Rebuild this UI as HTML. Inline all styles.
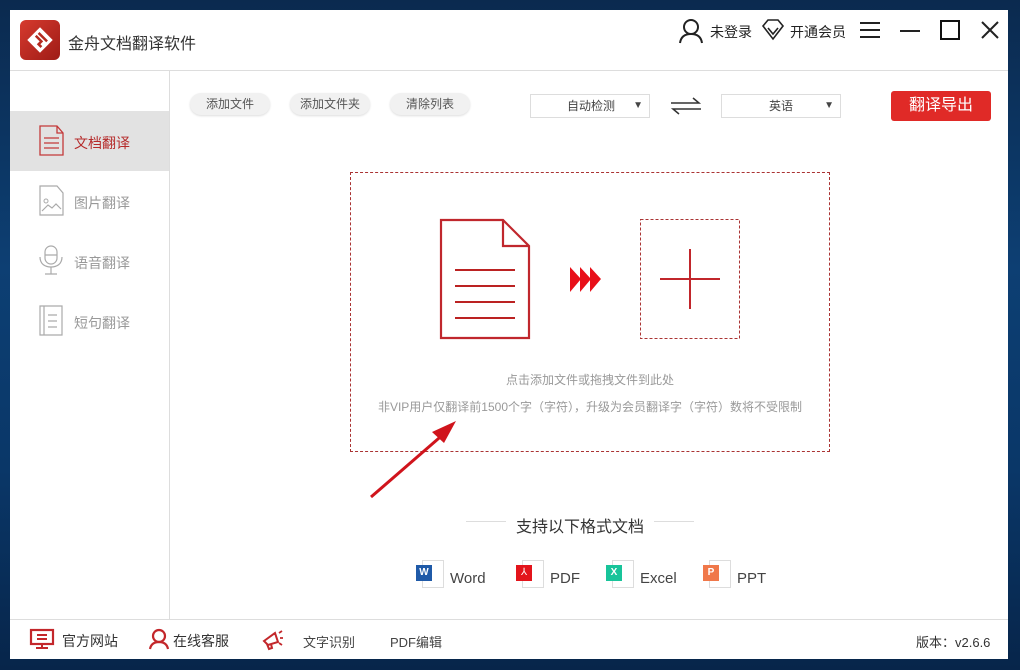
<!DOCTYPE html>
<html><head><meta charset="utf-8"><style>
*{margin:0;padding:0;box-sizing:border-box}
body{width:1020px;height:670px;overflow:hidden;background:linear-gradient(180deg,#0b2a4f 0%,#0d3f73 40%,#0a3768 70%,#07254a 100%);font-family:"Liberation Sans","Noto Sans CJK SC",sans-serif;position:relative}
.a{position:absolute}
.win{position:absolute;left:10px;top:10px;width:998px;height:649px;background:#fff}
.t{position:absolute;white-space:nowrap}
.btn{position:absolute;top:93px;height:22px;border-radius:11px;background:#f1f1f1;box-shadow:0 1px 2px #ddd;font-size:12px;color:#555;text-align:center;line-height:22px}
.sel{position:absolute;top:94px;height:24px;border:1px solid #ddd;font-size:12px;color:#444;line-height:22px}
.side{position:absolute;left:10px;width:159px;height:60px}
.side span{position:absolute;left:64px;top:22px;font-size:14px;color:#999}
</style></head><body>
<div class="win"></div>
<!-- header -->
<div class="a" style="left:20px;top:20px;width:40px;height:40px;border-radius:6px;background:linear-gradient(135deg,#d63a2e,#9e1b16)"></div>
<svg class="a" style="left:20px;top:20px" width="40" height="40"><g transform="rotate(45 20 20)" fill="none" stroke="#fff" stroke-width="3"><rect x="11" y="11" width="18" height="18" fill="#fff" stroke="none"/><path d="M14 16h12M14 20h8v4h4" stroke="#b42a20" stroke-width="2.5"/></g></svg>
<div class="t" style="left:68px;top:30px;font-size:16px;color:#333">金舟文档翻译软件</div>
<svg class="a" style="left:676px;top:16px" width="30" height="30"><circle cx="15" cy="11" r="7" fill="none" stroke="#222" stroke-width="2"/><path d="M4 27c1-7 6-9 11-9s10 2 11 9" fill="none" stroke="#222" stroke-width="2"/></svg>
<div class="t" style="left:710px;top:22px;font-size:14px;color:#222">未登录</div>
<svg class="a" style="left:760px;top:17px" width="26" height="26"><path d="M3 9l5-6h10l5 6-10 13z M8 11l5 6 5-6" fill="none" stroke="#222" stroke-width="1.6"/></svg>
<div class="t" style="left:790px;top:22px;font-size:14px;color:#222">开通会员</div>
<svg class="a" style="left:858px;top:20px" width="24" height="20"><path d="M2 3h20M2 10h20M2 17h20" stroke="#222" stroke-width="2"/></svg>
<div class="a" style="left:900px;top:30px;width:20px;height:2px;background:#222"></div>
<div class="a" style="left:940px;top:20px;width:20px;height:20px;border:2px solid #111"></div>
<svg class="a" style="left:980px;top:20px" width="20" height="20"><path d="M2 2l16 16M18 2L2 18" stroke="#222" stroke-width="2"/></svg>
<div class="a" style="left:10px;top:70px;width:998px;height:1px;background:#ddd"></div>
<!-- sidebar -->
<div class="a" style="left:169px;top:71px;width:1px;height:548px;background:#ddd"></div>
<div class="side" style="top:111px;background:#e2e2e2"><span style="color:#b52a2a">文档翻译</span></div>
<svg class="a" style="left:39px;top:125px" width="26" height="32"><path d="M1 1h17l6 7v22H1z M18 1v7h6 M5 13h15M5 18h15M5 23h15" fill="none" stroke="#c4393a" stroke-width="1.3"/></svg>
<div class="side" style="top:171px"><span>图片翻译</span></div>
<svg class="a" style="left:39px;top:185px" width="26" height="32"><path d="M1 1h17l6 7v22H1z M3 26l6-6 4 3 4-4 5 5" fill="none" stroke="#aaa" stroke-width="1.2"/><circle cx="7" cy="16" r="2" fill="none" stroke="#aaa"/></svg>
<div class="side" style="top:231px"><span>语音翻译</span></div>
<svg class="a" style="left:38px;top:245px" width="26" height="32"><rect x="7" y="1" width="12" height="18" rx="6" fill="none" stroke="#aaa" stroke-width="1.2"/><path d="M7 10h12M2 12c0 7 5 10 11 10s11-3 11-10M13 22v7M7 29h12" fill="none" stroke="#aaa" stroke-width="1.2"/></svg>
<div class="side" style="top:291px"><span>短句翻译</span></div>
<svg class="a" style="left:39px;top:305px" width="26" height="32"><path d="M1 1h22v29H1zM5 1v29M9 10h9M9 16h9M9 22h9" fill="none" stroke="#aaa" stroke-width="1.2"/></svg>
<!-- toolbar -->
<div class="btn" style="left:190px;width:80px">添加文件</div>
<div class="btn" style="left:290px;width:80px">添加文件夹</div>
<div class="btn" style="left:390px;width:80px">清除列表</div>
<div class="sel" style="left:530px;width:120px"><span style="position:absolute;left:36px">自动检测</span><span style="position:absolute;right:6px;font-size:10px">▼</span></div>
<svg class="a" style="left:669px;top:96px" width="34" height="20"><path d="M2 7h28l-6-5M32 13H4l6 5" fill="none" stroke="#333" stroke-width="1.5"/></svg>
<div class="sel" style="left:721px;width:120px"><span style="position:absolute;left:47px">英语</span><span style="position:absolute;right:6px;font-size:10px">▼</span></div>
<div class="a" style="left:891px;top:91px;width:100px;height:30px;background:#e02a27;border-radius:3px;color:#fff;font-size:16px;text-align:center;line-height:30px">翻译导出</div>
<!-- drop area -->
<div class="a" style="left:350px;top:172px;width:480px;height:280px;border:1px dashed #a33"></div>
<svg class="a" style="left:420px;top:200px" width="340" height="150">
<path d="M21 20h62l26 26v92H21z M83 20v26h26" fill="none" stroke="#c0272d" stroke-width="2.2"/>
<path d="M35 70h60M35 86h60M35 102h60M35 118h60" stroke="#b22" stroke-width="2"/>
<path d="M150 67l11 12-11 13zM160 67l11 12-11 13zM170 67l11 12-11 13z" fill="#e8101a"/>
<rect x="220.5" y="19.5" width="99" height="119" fill="none" stroke="#a33" stroke-dasharray="3,2"/>
<path d="M240 79h60M270 49v60" stroke="#c1262b" stroke-width="2"/>
</svg>
<div class="t" style="left:350px;width:480px;text-align:center;top:371px;font-size:12px;color:#999">点击添加文件或拖拽文件到此处</div>
<div class="t" style="left:350px;width:480px;text-align:center;top:398px;font-size:12px;color:#999">非VIP用户仅翻译前1500个字（字符），升级为会员翻译字（字符）数将不受限制</div>
<svg class="a" style="left:360px;top:410px" width="110" height="100"><path d="M11 87L86 22" stroke="#d0141c" stroke-width="3"/><path d="M96 11L72 22 84 33z" fill="#d0141c"/></svg>
<div class="a" style="left:466px;top:521px;width:40px;height:1px;background:#ddd"></div>
<div class="a" style="left:654px;top:521px;width:40px;height:1px;background:#ddd"></div>
<div class="t" style="left:516px;top:513px;font-size:16px;color:#333">支持以下格式文档</div>
<!-- formats -->
<div class="a" style="left:422px;top:560px;width:22px;height:28px;border:1px solid #ddd"></div>
<div class="a" style="left:416px;top:565px;width:16px;height:16px;background:#1f5aa8;color:#fff;font-size:10px;font-weight:bold;text-align:center;line-height:16px">W</div>
<div class="t" style="left:450px;top:570px;font-size:15px;color:#444">Word</div>
<div class="a" style="left:522px;top:560px;width:22px;height:28px;border:1px solid #ddd"></div>
<div class="a" style="left:516px;top:565px;width:16px;height:16px;background:#e3141b;color:#fff;font-size:10px;text-align:center;line-height:16px">⅄</div>
<div class="t" style="left:550px;top:570px;font-size:15px;color:#444">PDF</div>
<div class="a" style="left:612px;top:560px;width:22px;height:28px;border:1px solid #ddd"></div>
<div class="a" style="left:606px;top:565px;width:16px;height:16px;background:#18c49a;color:#fff;font-size:10px;font-weight:bold;text-align:center;line-height:16px">X</div>
<div class="t" style="left:640px;top:570px;font-size:15px;color:#444">Excel</div>
<div class="a" style="left:709px;top:560px;width:22px;height:28px;border:1px solid #ddd"></div>
<div class="a" style="left:703px;top:565px;width:16px;height:16px;background:#f0784a;color:#fff;font-size:10px;font-weight:bold;text-align:center;line-height:16px">P</div>
<div class="t" style="left:737px;top:570px;font-size:15px;color:#444">PPT</div>
<!-- footer -->
<div class="a" style="left:10px;top:619px;width:998px;height:1px;background:#ddd"></div>
<svg class="a" style="left:29px;top:628px" width="26" height="22"><rect x="2" y="2" width="22" height="14" fill="none" stroke="#c3272b" stroke-width="2.2"/><path d="M8 7h10M8 11h10M13 16v3M7 20h12" stroke="#c3272b" stroke-width="2"/></svg>
<div class="t" style="left:62px;top:631px;font-size:14px;color:#333">官方网站</div>
<svg class="a" style="left:148px;top:628px" width="22" height="22"><circle cx="11" cy="8" r="6" fill="none" stroke="#c3272b" stroke-width="2.2"/><path d="M2 21c1-5 4-7 9-7s8 2 9 7" fill="none" stroke="#c3272b" stroke-width="2.2"/></svg>
<div class="t" style="left:173px;top:631px;font-size:14px;color:#333">在线客服</div>
<svg class="a" style="left:261px;top:629px" width="24" height="22"><path d="M3 12l11-8 3 9-10 3zM6 15l2 5 3-1-1-4" fill="none" stroke="#c3272b" stroke-width="2"/><path d="M18 4l3-2M19 9h3M18 14l3 2" stroke="#c3272b" stroke-width="1.8"/></svg>
<div class="t" style="left:303px;top:632px;font-size:13px;color:#444">文字识别</div>
<div class="t" style="left:390px;top:632px;font-size:13px;color:#444">PDF编辑</div>
<div class="t" style="left:916px;top:632px;font-size:13px;color:#333">版本：v2.6.6</div>
</body></html>
